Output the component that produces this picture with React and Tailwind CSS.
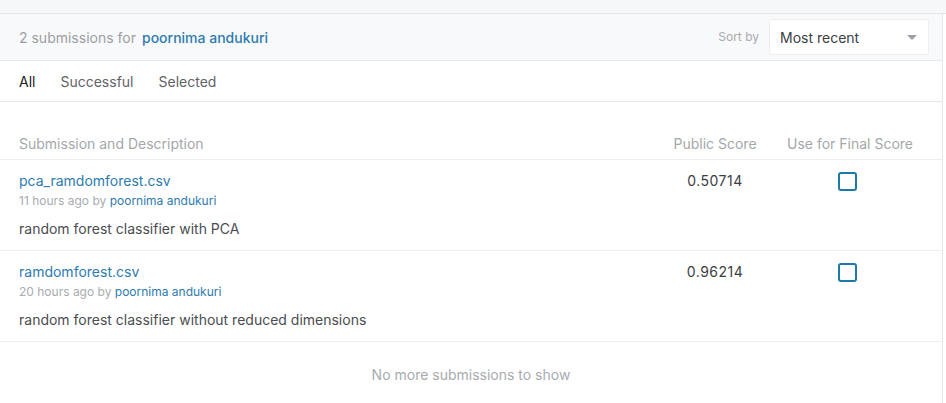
import { useState } from 'react';

const rows = [
  {
    file: 'pca_ramdomforest.csv',
    when: '11 hours ago',
    desc: 'random forest classifier with PCA',
    score: '0.50714',
  },
  {
    file: 'ramdomforest.csv',
    when: '20 hours ago',
    desc: 'random forest classifier without reduced dimensions',
    score: '0.96214',
  },
];

export default function App() {
  const [tab, setTab] = useState('All');
  const [picked, setPicked] = useState({});

  return (
    <div className="min-h-[403px] bg-white font-['Inter','Liberation_Sans',sans-serif] text-[14px]">
      <div className="h-[14px] border-b border-[#e4e7ea] bg-[#f5f7f9]" />
      <div className="w-[943px] border-r border-[#e4e7ea]">
        <div className="flex h-[47px] items-center border-b border-[#e6e8ea] bg-[#f8f9fa] pl-[19px] pr-[13px]">
          <span className="text-[#9c9fa3]">2 submissions for</span>
          <a className="ml-[6px] font-medium text-[#2e7bb0]">poornima andukuri</a>
          <div className="ml-auto flex items-center">
            <span className="mr-[10px] text-[12px] text-[#a8abaf]">Sort by</span>
            <button className="flex h-[36px] w-[160px] items-center justify-between rounded-[3px] border border-[#eceef0] bg-white pl-[10px] pr-[11px] text-[14px] text-[#3c4043]">
              Most recent
              <svg width="10" height="5" viewBox="0 0 10 5">
                <path d="M0 0h10L5 5z" fill="#9aa0a6" />
              </svg>
            </button>
          </div>
        </div>

        <div className="flex h-[41px] items-center gap-[25px] border-b border-[#e6e8ea] pl-[19px]">
          {['All', 'Successful', 'Selected'].map((t) => (
            <button
              key={t}
              onClick={() => setTab(t)}
              className={tab === t ? 'text-[#202124]' : 'text-[#5f6368]'}
            >
              {t}
            </button>
          ))}
        </div>

        <div className="flex items-center border-b border-[#eceef0] pb-[5px] pl-[19px] pr-[22px] pt-[32px] leading-5 text-[#a4a7ab]">
          <div className="flex-1">Submission and Description</div>
          <div className="w-[100px] text-center">Public Score</div>
          <div className="w-[155px] pl-[15px] text-center">Use for Final Score</div>
        </div>

        {rows.map((r) => (
          <div key={r.file} className="flex border-b border-[#eceef0] pb-[11px] pl-[19px] pr-[22px] pt-[11px]">
            <div className="flex-1">
              <div className="leading-5 text-[#2e7bb0]">{r.file}</div>
              <div className="mt-[2px] text-[12px] leading-4 text-[#a8abaf]">
                {r.when} by <span className="text-[#2e7bb0]">poornima andukuri</span>
              </div>
              <div className="mt-[10px] leading-5 text-[#4a4d51]">{r.desc}</div>
            </div>
            <div className="w-[100px] text-center leading-5 tracking-[0.5px] text-[#3c4043]">{r.score}</div>
            <div className="flex w-[155px] justify-center pl-[10px] pt-[1px]">
              <button
                onClick={() => setPicked({ ...picked, [r.file]: !picked[r.file] })}
                className={`h-[19px] w-[19px] rounded-[3px] border-2 border-[#1b7aa6] ${picked[r.file] ? 'bg-[#1b7aa6]' : 'bg-white'}`}
              />
            </div>
          </div>
        ))}

        <div className="flex h-[62px] items-center justify-center pt-[2px] text-[#a8abaf]">
          No more submissions to show
        </div>
      </div>
    </div>
  );
}
